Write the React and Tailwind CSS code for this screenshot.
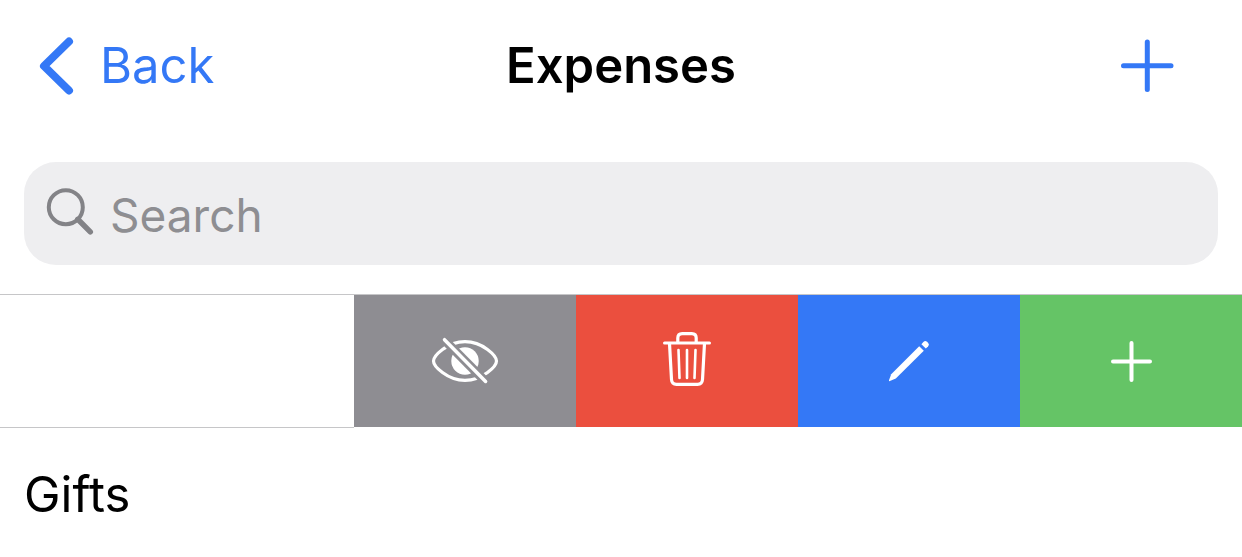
function ChevronLeftIcon() {
  return (
    <svg width="40" height="64" viewBox="0 0 40 64" fill="none" aria-hidden="true">
      <path d="M33 7.5 8 32 33 56.5" stroke="currentColor" strokeWidth="8" strokeLinecap="round" strokeLinejoin="round" />
    </svg>
  );
}

function PlusIcon() {
  return (
    <svg width="54" height="54" viewBox="0 0 54 54" fill="none" aria-hidden="true">
      <path d="M27.3 3v47.5M3.5 26.7h47.5" stroke="currentColor" strokeWidth="5" strokeLinecap="round" />
    </svg>
  );
}

function SmallPlusIcon() {
  return (
    <svg width="54" height="54" viewBox="0 0 54 54" fill="none" aria-hidden="true">
      <path d="M27.5 9v37M9 27.5h37" stroke="currentColor" strokeWidth="4" strokeLinecap="round" />
    </svg>
  );
}

function SearchIcon() {
  return (
    <svg width="48" height="53" viewBox="0 0 48 53" fill="none" stroke="#838387" aria-hidden="true">
      <circle cx="19.8" cy="20.2" r="17" strokeWidth="4" />
      <path d="M31.8 32.3 44.3 44.9" strokeWidth="5.5" strokeLinecap="round" />
    </svg>
  );
}

function HideIcon() {
  return (
    <svg width="70" height="50" viewBox="0 0 70 50" fill="none" aria-hidden="true">
      <path d="M3.5 25C3.5 20 17 5.6 35 5.6S66.5 20 66.5 25 53 44.4 35 44.4 3.5 30 3.5 25Z" stroke="white" strokeWidth="3.2" />
      <circle cx="35" cy="25" r="13.7" fill="white" />
      <path d="M16 5.7 56 46" stroke="#8e8d92" strokeWidth="9" />
      <path d="M14.5 3.7 55.6 45.5" stroke="white" strokeWidth="3.5" strokeLinecap="round" />
    </svg>
  );
}

function TrashIcon() {
  return (
    <svg width="50" height="60" viewBox="0 0 50 60" fill="none" stroke="white" strokeLinecap="round" strokeLinejoin="round" aria-hidden="true">
      <path d="M2.5 12h45" strokeWidth="3" />
      <path d="M15.8 11.5V7q0-4.4 4.4-4.4h9.6q4.4 0 4.4 4.4v4.5" strokeWidth="3.2" />
      <path d="m7.5 12.5 2 36q.3 4.8 5 4.8h21q4.7 0 5-4.8l2-36" strokeWidth="3.2" />
      <path d="m16.5 19 1 28M25 19v28M33.5 19l-1 28" strokeWidth="2.6" />
    </svg>
  );
}

function PencilIcon() {
  return (
    <svg width="44" height="44" viewBox="0 0 44 44" fill="white" aria-hidden="true">
      <path d="m32.2 7.2 4.6 4.6L8.8 39.4 2.9 42.1Q1.6 42.5 2 41.2L4.2 35.2Z" />
      <path d="m34.4 5.2 2-2.3q1.8-1.800 3.600-.2l1.200 1.200q1.600 1.800-.2 3.600l-2.200 2Z" />
    </svg>
  );
}

const actions = [
  { label: "Hide", color: "bg-[#8e8d92]", Icon: HideIcon },
  { label: "Delete", color: "bg-[#eb4f3e]", Icon: TrashIcon },
  { label: "Edit", color: "bg-[#3478f6]", Icon: PencilIcon },
  { label: "Add", color: "bg-[#65c466]", Icon: SmallPlusIcon },
];

export default function App() {
  return (
    <main className="min-h-screen bg-white font-['Inter','Liberation_Sans',sans-serif] text-black">
      <header className="grid h-[132px] grid-cols-[1fr_auto_1fr] items-center px-9 text-[49px] leading-[60px]">
        <a href="#back" className="flex items-center gap-6 text-[#3478f6]">
          <ChevronLeftIcon />
          Back
        </a>
        <h1 className="font-semibold">Expenses</h1>
        <button type="button" aria-label="Add expense" className="mr-8 justify-self-end text-[#3478f6]">
          <PlusIcon />
        </button>
      </header>

      <div className="px-6 pt-[30px] pb-[29px]">
        <label className="flex h-[103px] items-center gap-4 rounded-[32px] bg-[#eeeef0] px-[22px]">
          <SearchIcon />
          <input
            type="search"
            aria-label="Search"
            placeholder="Search"
            className="min-w-0 flex-1 bg-transparent pt-0.5 text-[46px] leading-[60px] outline-none placeholder:text-[#8e8e92]"
          />
        </label>
      </div>

      <ul className="border-t border-[#c6c6c8]">
        <li className="flex h-[133px]">
          <div className="flex-1 border-b border-[#c6c6c8]" />
          <div className="mb-px flex">
            {actions.map(({ label, color, Icon }) => (
              <button
                key={label}
                type="button"
                aria-label={label}
                className={`flex w-[222px] items-center justify-center text-white ${color}`}
              >
                <Icon />
              </button>
            ))}
          </div>
        </li>
        <li className="flex h-[133px] items-center px-6 text-[49px] leading-[60px]">Gifts</li>
      </ul>
    </main>
  );
}
